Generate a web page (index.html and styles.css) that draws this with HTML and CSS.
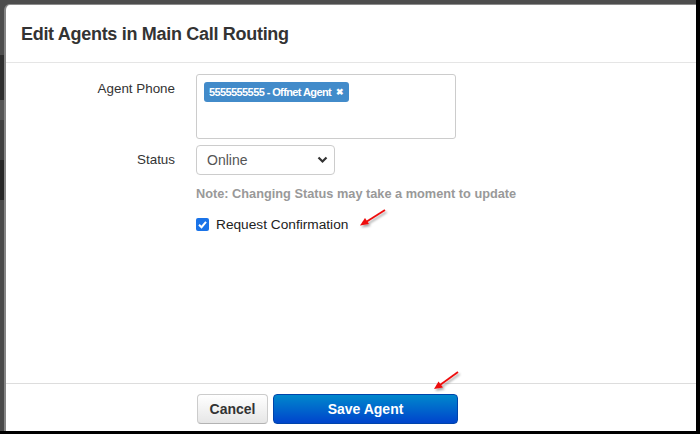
FILE: index.html
```html
<!DOCTYPE html>
<html>
<head>
<meta charset="utf-8">
<link rel="stylesheet" href="styles.css">
</head>
<body>
<div class="screen">
  <div class="modal">
    <div class="modal-header">
      <h3 class="title">Edit Agents in Main Call Routing</h3>
    </div>
    <div class="modal-body">
      <div class="row">
        <label class="label">Agent Phone</label>
        <div class="tagbox">
          <span class="tag">5555555555 - Offnet Agent <span class="tag-x">&#x2716;</span></span>
        </div>
      </div>
      <div class="row">
        <label class="label label-mid">Status</label>
        <div class="select">
          <span>Online</span>
          <svg class="chev" width="11" height="8" viewBox="0 0 11 8"><path d="M1.5 1.5 L5.5 5.5 L9.5 1.5" fill="none" stroke="#333" stroke-width="2.2"/></svg>
        </div>
      </div>
      <div class="row">
        <span></span>
        <p class="note">Note: Changing Status may take a moment to update</p>
      </div>
      <div class="row">
        <span></span>
        <label class="check">
          <span class="box"><svg width="13" height="13" viewBox="0 0 13 13"><path d="M3 6.8 L5.5 9.2 L10 3.8" fill="none" stroke="#fff" stroke-width="2"/></svg></span>
          Request Confirmation
        </label>
      </div>
    </div>
    <div class="modal-footer">
      <span></span>
      <div class="buttons">
        <button class="btn btn-cancel">Cancel</button>
        <button class="btn btn-primary">Save Agent</button>
      </div>
    </div>
  </div>
  <svg class="arrow arrow-1" width="40" height="30" viewBox="0 0 40 30">
    <defs><filter id="sh" x="-50%" y="-50%" width="200%" height="200%"><feDropShadow dx="1.5" dy="2" stdDeviation="1.2" flood-color="#000" flood-opacity="0.35"/></filter></defs>
    <g filter="url(#sh)"><line x1="31" y1="4" x2="12" y2="16" stroke="#ee1111" stroke-width="1.8"/><path d="M6 19.5 L11 12 L15 18 Z" fill="#ee1111"/></g>
  </svg>
  <svg class="arrow arrow-2" width="40" height="30" viewBox="0 0 40 30">
    <g filter="url(#sh)"><line x1="30" y1="4" x2="12" y2="17" stroke="#ee1111" stroke-width="1.8"/><path d="M6 21 L10.5 13.5 L15 19.5 Z" fill="#ee1111"/></g>
  </svg>
</div>
</body>
</html>
```
FILE: styles.css
```css
html, body {
  margin: 0;
  padding: 0;
  background: #000;
}
body {
  width: 700px;
  height: 434px;
  overflow: hidden;
  font-family: "Liberation Sans", Arial, sans-serif;
}
.screen {
  position: relative;
  width: 696px;
  height: 431px;
  background: linear-gradient(to bottom, #4d4d4d 0 55px, #2e2e2e 55px 100px, #555 100px 120px, #404040 120px 160px, #262626 160px 200px, #4a4a4a 200px);
  padding: 4px 0 0 4px;
  box-sizing: border-box;
  overflow: hidden;
}
.modal {
  background: #fff;
  border-top: 1px solid #8c8c8c;
  border-left: 2px solid #858585;
  border-top-left-radius: 6px;
  height: 100%;
  box-sizing: border-box;
  display: flex;
  flex-direction: column;
}
.modal-header {
  height: 58px;
  padding: 0 15px;
  border-bottom: 1px solid #e5e5e5;
  display: flex;
  align-items: center;
  box-sizing: border-box;
}
.title {
  margin: 0;
  font-size: 18px;
  font-weight: bold;
  color: #333;
  letter-spacing: -0.3px;
  position: relative;
  top: 1px;
}
.modal-body {
  flex: 1;
  padding: 11px 15px 0;
  display: flex;
  flex-direction: column;
}
.row {
  display: grid;
  grid-template-columns: 154px auto;
  column-gap: 21px;
  align-items: start;
}
.label {
  text-align: right;
  font-size: 13.4px;
  color: #333;
  padding-top: 7px;
}
.label-mid {
  padding-top: 7px;
}
.tagbox {
  width: 260px;
  height: 65px;
  border: 1px solid #ccc;
  border-radius: 3px;
  box-sizing: border-box;
  padding: 7px 7px;
  margin-bottom: 6px;
}
.tag {
  display: inline-flex;
  align-items: center;
  height: 20px;
  padding: 0 5px 0 5px;
  background: #428bca;
  border-radius: 3px;
  color: #fff;
  font-size: 11px;
  font-weight: bold;
  letter-spacing: -0.6px;
  white-space: pre;
}
.tag-x {
  font-size: 9px;
  margin-left: 2px;
  letter-spacing: 0;
}
.select {
  width: 139px;
  height: 30px;
  border: 1px solid #ccc;
  border-radius: 4px;
  box-sizing: border-box;
  display: flex;
  align-items: center;
  justify-content: space-between;
  padding: 0 6px 0 10px;
  font-size: 14px;
  color: #555;
}
.chev {
  display: block;
}
.note {
  margin: 11px 0 0;
  font-size: 12.75px;
  font-weight: bold;
  color: #999;
}
.check {
  margin-top: 16px;
  display: flex;
  align-items: center;
  gap: 7px;
  font-size: 13.7px;
  color: #222;
}
.box {
  width: 13px;
  height: 13px;
  background: #1a73e8;
  border-radius: 2px;
  display: block;
}
.box svg {
  display: block;
}
.modal-footer {
  height: 48px;
  border-top: 1px solid #ddd;
  box-sizing: border-box;
  padding: 10px 15px 0 16px;
  display: grid;
  grid-template-columns: 154px auto;
  column-gap: 21px;
  align-items: start;
}
.buttons {
  display: flex;
  gap: 5px;
}
.btn {
  height: 30px;
  border-radius: 4px;
  font-family: "Liberation Sans", Arial, sans-serif;
  font-size: 14px;
  font-weight: bold;
  cursor: pointer;
  padding: 0;
}
.btn-cancel {
  width: 71px;
  color: #333;
  background: linear-gradient(to bottom, #fff, #e6e6e6);
  border: 1px solid #ccc;
  border-bottom-color: #b3b3b3;
}
.btn-primary {
  width: 185px;
  color: #fff;
  background: linear-gradient(to bottom, #0088cc, #0044cc);
  border: 1px solid #0044aa;
}
.arrow {
  position: absolute;
}
.arrow-1 {
  left: 354px;
  top: 206px;
}
.arrow-2 {
  left: 428px;
  top: 368px;
}
```
